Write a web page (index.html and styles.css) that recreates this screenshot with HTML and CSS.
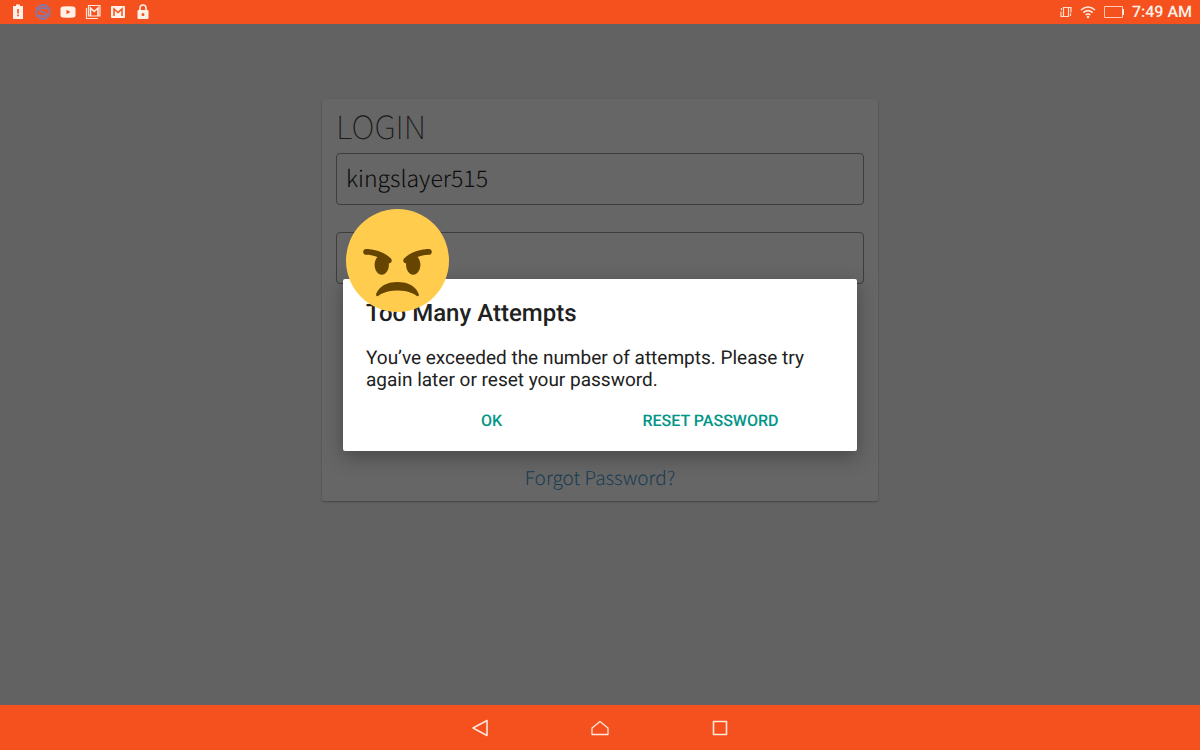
FILE: index.html
```html
<!DOCTYPE html>
<html lang="en">
<head>
<meta charset="utf-8">
<meta name="viewport" content="width=device-width, initial-scale=1">
<title>Login</title>
<link rel="stylesheet" href="styles.css">
</head>
<body>
<header class="status">
  <div class="status-left">
    <svg class="icon" viewBox="0 0 16 16"><path fill="#fff0e8" fill-rule="evenodd" d="M6 .5h4V2h3v13H3V2h3zM7.200 5v4.500h1.600V5zm0 5.500v1.800h1.600v-1.800z"/></svg>
    <svg class="icon" viewBox="0 0 16 16"><g fill="none" stroke="#8878a6" stroke-width="1.800"><circle cx="8" cy="8" r="7"/><path d="M13.500 4.500Q4 3 4 5.800C4 8 12 8 12 10.200Q12 13 2.500 11.500"/></g></svg>
    <svg class="icon" viewBox="0 0 16 16"><path fill="#fff0e8" fill-rule="evenodd" d="M3 2.500Q8 2 13 2.500 15.500 2.500 15.500 5v6q0 2.500-2.500 2.500-5 .5-10 0Q.5 13.500.5 11V5Q.5 2.500 3 2.500zM6.500 5.800v4.400l4-2.200z"/></svg>
    <svg class="icon" viewBox="0 0 16 16"><path fill="none" stroke="#ffe6da" stroke-width="1.200" d="M1.500 4v10.500H13M3.500 1.500h11.500v10.500H3.500z"/><path fill="none" stroke="#fff0e8" stroke-width="1.600" d="M5.500 12V4l3.750 3.500L13 4v8"/></svg>
    <svg class="icon" viewBox="0 0 16 16"><rect x="1" y="2" width="14" height="12" rx="1" fill="#fff0e8"/><path fill="none" stroke="#f4511e" stroke-width="1.500" d="M4 12V5l4 3.500L12 5v7"/></svg>
    <svg class="icon" viewBox="0 0 16 16"><path fill="none" stroke="#fff0e8" stroke-width="1.600" d="M5 7V4a3 3 0 0 1 6 0v3"/><path fill="#fff0e8" fill-rule="evenodd" d="M3.500 6h9q1 0 1 1v7q0 1-1 1h-9q-1 0-1-1V7q0-1 1-1zM8 9a1.500 1.500 0 1 0 0 3 1.500 1.500 0 0 0 0-3z"/></svg>
  </div>
  <div class="status-right">
    <svg class="rotate" viewBox="0 0 12 12"><g fill="none" stroke="#ffdfd0" stroke-width="1.200"><path d="M3.500 1.500h5v9h-5zM8.500 1.500H11v5M1 5.500v5h2.500M10.500 7.500V10M1.500 2v2"/></g></svg>
    <svg class="wifi" viewBox="0 0 16 14"><g fill="none" stroke="#ffe6da" stroke-width="1.600"><path d="M1 5q7-6 14 0M3.300 7.600q4.700-4 9.400 0M5.600 10q2.400-2 4.800 0"/></g><circle cx="8" cy="12" r="1.300" fill="#ffe6da"/></svg>
    <svg class="battery" viewBox="0 0 20 12"><path fill="none" stroke="#ffc9b3" d="M.5.5h18v11H.5z"/><path fill="#ffe6da" d="M18 3h2v6h-2z"/></svg>
    <time class="clock">7:49 AM</time>
  </div>
</header>

<main class="screen">
  <form class="card">
    <h1 class="title">LOGIN</h1>
    <input class="field" type="text" aria-label="Username" value="kingslayer515">
    <input class="field" type="password" aria-label="Password">
    <a class="forgot" href="#">Forgot Password?</a>
  </form>
  <div class="scrim"></div>
  <section class="dialog" role="alertdialog" aria-labelledby="dialog-title" aria-describedby="dialog-text">
    <h2 class="dialog-title" id="dialog-title">Too Many Attempts</h2>
    <p class="dialog-text" id="dialog-text">You’ve exceeded the number of attempts. Please try again later or reset your password.</p>
    <div class="actions">
      <button class="action" type="button">OK</button>
      <button class="action" type="button">RESET PASSWORD</button>
    </div>
    <svg class="emoji" viewBox="0 0 36 36" role="img" aria-label="Angry face"><circle cx="18" cy="18" r="18" fill="#ffcc4d"/><path fill="#664500" d="M25.485 29.879C25.440 29.700 24.317 25.500 18 25.500c-6.318 0-7.440 4.200-7.485 4.379-.055.217.043.442.237.554.195.109.439.079.6-.077.019-.019 1.954-1.856 6.648-1.856s6.630 1.837 6.648 1.855c.096.095.224.145.352.145.084 0 .169-.021.246-.064.196-.112.294-.339.239-.557zm-9.778-12.586C12.452 14.038 7.221 14 7 14c-.552 0-.999.447-.999.998-.001.552.446 1 .998 1.002.029 0 1.925.022 3.983.737-.593.640-.982 1.634-.982 2.763 0 1.934 1.119 3.500 2.500 3.500s2.500-1.566 2.500-3.500c0-.174-.019-.340-.037-.507.013 0 .025.007.037.007.256 0 .512-.098.707-.293.391-.391.391-1.023 0-1.414zM29 14c-.221 0-5.451.038-8.707 3.293-.391.391-.391 1.023 0 1.414.195.195.451.293.707.293.013 0 .024-.007.036-.007-.016.167-.036.333-.036.507 0 1.934 1.119 3.500 2.500 3.500s2.500-1.566 2.500-3.500c0-1.129-.389-2.123-.982-2.763 2.058-.715 3.954-.737 3.984-.737.551-.002.998-.450.997-1.002-.001-.551-.447-.998-.999-.998z"/></svg>
  </section>
</main>

<nav class="navbar" aria-label="System">
  <button class="nav-button" type="button" aria-label="Back"><svg class="nav-icon" viewBox="0 0 20 20"><path d="M3 10l14-7.500v15z"/></svg></button>
  <button class="nav-button" type="button" aria-label="Home"><svg class="nav-icon" viewBox="0 0 20 20"><path stroke-width="1.300" d="M2 16.500V10l8-6.500 8 6.500v6.500z"/></svg></button>
  <button class="nav-button" type="button" aria-label="Recent apps"><svg class="nav-icon" viewBox="0 0 20 20"><path d="M3.500 3.500h13v13h-13z"/></svg></button>
</nav>
</body>
</html>
```
FILE: styles.css
```css
* {
  box-sizing: border-box;
}

body {
  margin: 0;
  min-height: 100vh;
  display: grid;
  grid-template-rows: 24px 1fr 45px;
  background: #f4511e;
  font-family: Roboto, sans-serif;
  text-rendering: geometricPrecision;
}

.status,
.status-left,
.status-right {
  display: flex;
  align-items: center;
}

.status {
  justify-content: space-between;
  padding: 0 8px 0 10px;
  color: #fff0e8;
}

.status-left {
  gap: 9px;
}

.status-right {
  gap: 8px;
}

.icon {
  width: 16px;
  height: 16px;
}

.rotate {
  width: 12px;
  height: 12px;
}

.wifi {
  width: 16px;
  height: 14px;
}

.battery {
  width: 20px;
  height: 12px;
}

.clock {
  font-size: 16px;
  font-weight: 500;
  line-height: 24px;
}

.screen {
  position: relative;
  padding: 75px 16px;
  background: #f5f5f5;
}

.card {
  display: flex;
  flex-direction: column;
  width: 100%;
  max-width: 556px;
  min-height: 402px;
  margin: 0 auto;
  padding: 8px 14px;
  border-radius: 2px;
  background: #fff;
  box-shadow: 0 1px 2px rgba(0, 0, 0, 0.3);
  font-family: "Noto Sans CJK SC", "Open Sans", sans-serif;
  font-weight: 300;
}

.title {
  margin: 0 0 7px;
  color: #444;
  font-size: 32px;
  font-weight: 100;
  line-height: 39px;
}

.field {
  width: 100%;
  height: 52px;
  margin-bottom: 27px;
  padding: 0 9px 4px;
  border: 1px solid #999;
  border-radius: 4px;
  background: transparent;
  color: #222;
  font: inherit;
  font-size: 23px;
  text-rendering: inherit;
}

.forgot {
  align-self: center;
  margin-top: auto;
  color: #3f97cf;
  font-size: 19px;
  line-height: 30px;
  text-decoration: none;
}

.scrim {
  position: absolute;
  inset: 0;
  background: rgba(0, 0, 0, 0.6);
}

.dialog {
  position: absolute;
  top: 50%;
  left: 50%;
  width: min(514px, 92%);
  padding: 19px 23px 12px;
  border-radius: 2px;
  background: #fff;
  box-shadow: 0 6px 20px rgba(0, 0, 0, 0.3);
  color: #212121;
  transform: translate(-50%, -50%);
}

.dialog-title {
  margin: 0 0 19px;
  font-size: 24px;
  font-weight: 500;
  line-height: 30px;
}

.dialog-text {
  margin: 0;
  font-size: 19px;
  line-height: 22px;
}

.actions {
  display: grid;
  grid-template-columns: 1fr 1fr;
  padding: 12px 14px 0 16px;
}

.action {
  height: 36px;
  padding: 0;
  border: 0;
  background: none;
  color: #009688;
  font: inherit;
  font-size: 16px;
  font-weight: 500;
  text-rendering: inherit;
}

.emoji {
  position: absolute;
  top: -70px;
  left: 3px;
  width: 103px;
  height: 103px;
}

.navbar {
  display: flex;
  align-items: center;
  justify-content: center;
  gap: 80px;
}

.nav-button {
  display: grid;
  place-items: center;
  width: 40px;
  height: 40px;
  padding: 0;
  border: 0;
  background: none;
}

.nav-icon {
  width: 20px;
  height: 20px;
  fill: none;
  stroke: #ffe6da;
  stroke-width: 1.6;
  stroke-linejoin: round;
}
```
